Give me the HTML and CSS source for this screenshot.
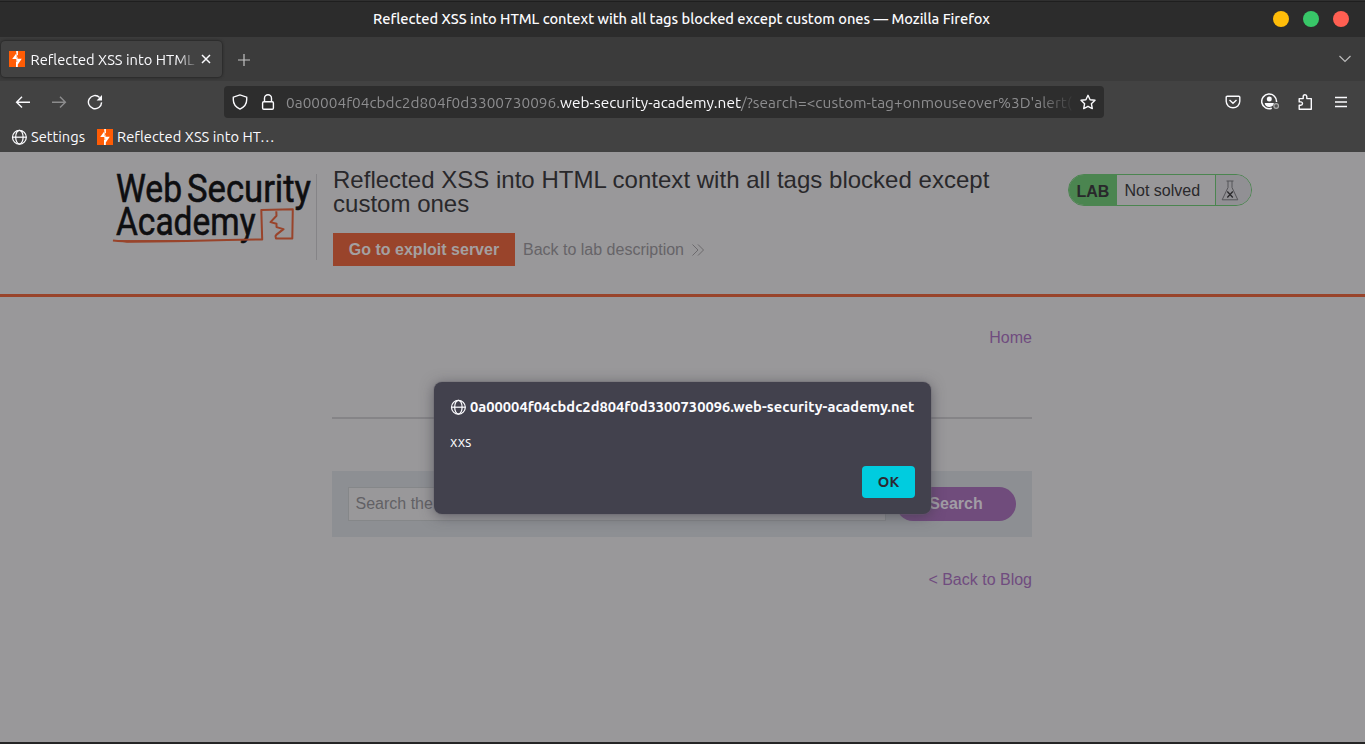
FILE: index.html
```html
<!DOCTYPE html>
<html lang="en">
<head>
<meta charset="utf-8">
<title>Reflected XSS into HTML context with all tags blocked except custom ones</title>
<link rel="stylesheet" href="styles.css">
</head>
<body>
<svg class="defs" width="0" height="0">
  <symbol id="bolt" viewBox="0 0 16 16"><rect width="16" height="16" fill="#ff5c05"/><path d="M7.2 0h1.7v4.2H7.4zM7.6 2 3.2 7.9h4.2L7.8 5zM8.5 5.3v2.5h4.3L8.6 13.7l-.3-3.9H7.2l.2-2zM7 10.5h1.8V16H7z" fill="#fff"/></symbol>
  <symbol id="globe" viewBox="0 0 16 16"><g fill="none" stroke="currentColor" stroke-width="1.25"><circle cx="8.4" cy="8.200" r="6.9"/><ellipse cx="8.4" cy="8.200" rx="3.700" ry="6.9"/><path d="M1.4 8.200h14"/></g></symbol>
</svg>
<header class="titlebar">
  <span class="window-title">Reflected XSS into HTML context with all tags blocked except custom ones — Mozilla Firefox</span>
  <div class="window-buttons"><i class="dot yellow"></i><i class="dot green"></i><i class="dot red"></i></div>
</header>
<nav class="tabs">
  <div class="tab">
    <svg class="i16"><use href="#bolt"/></svg>
    <span class="tab-title">Reflected XSS into HTML context</span>
    <svg class="close" viewBox="0 0 10 10"><path d="M1 1l8 8M9 1l-8 8"/></svg>
  </div>
  <svg class="plus" viewBox="0 0 12 12"><path d="M6 0v12M0 6h12"/></svg>
  <svg class="chevron" viewBox="0 0 12 8"><path d="M.5 1 6 6.5 11.5 1"/></svg>
</nav>
<div class="toolbar">
  <div class="nav-buttons">
    <svg class="i16 line" viewBox="0 0 16 16"><path d="M15 8.2H1.6M7 2.8 1.6 8.2 7 13.6"/></svg>
    <svg class="i16 line off" viewBox="0 0 16 16"><path d="M1 8.2h13.4M9 2.8l5.4 5.4L9 13.6"/></svg>
    <svg class="i16 line" viewBox="0 0 16 16"><path d="M12.6 3.4A6.6 6.6 0 1 0 14.6 8.4"/><path d="M15 1v5.4H9.6z" fill="currentColor" stroke="none"/></svg>
  </div>
  <div class="urlbar">
    <svg class="i16 line" viewBox="0 0 16 16"><path d="M8 .9 1.3 3.2v2.6c0 4.2 3 7.6 6.7 9.3 3.700-1.700 6.700-5.100 6.700-9.300V3.200z"/></svg>
    <svg class="i16 line lock" viewBox="0 0 16 16"><rect x="2.600" y="7.700" width="10.800" height="7.600" rx="1.200"/><path d="M4.500 7.500V4.200a3.500 3.500 0 0 1 7 0v3.300"/></svg>
    <span class="url"><span class="sub">0a00004f04cbdc2d804f0d3300730096.</span><span class="domain">web-security-academy.net</span><span class="path">/?search=&lt;custom-tag+onmouseover%3D'alert('</span></span>
    <svg class="i16 line" viewBox="0 0 16 16"><path d="m8 1.300 2.100 4.400 4.900.6-3.600 3.400.9 4.900L8 12.300l-4.300 2.300.9-4.900L1 6.300l4.900-.6z" stroke-linejoin="round"/></svg>
  </div>
  <div class="tools">
    <svg class="i16 line" viewBox="0 0 16 16"><path d="M2.200 2.300h11.600q1 0 1 1v4A6.800 6.500 0 0 1 1.200 7.300v-4q0-1 1-1zM4.500 6 8 9.300 11.500 6"/></svg>
    <svg class="account" viewBox="0 0 19 17"><g fill="none" stroke="currentColor" stroke-width="1.500"><path d="M10.800 15.300A7.400 7.400 0 1 1 15.500 9"/></g><circle cx="8.300" cy="6" r="2.500" fill="currentColor"/><path d="M3.700 9.900h9.200c-.2 2.600-2.100 4-4.600 4s-4.400-1.500-4.600-4z" fill="currentColor"/><circle cx="15.200" cy="13" r="2.300" fill="#555" stroke="#aaa" stroke-width="1.200"/></svg>
    <svg class="i16 line puzzle" viewBox="0 0 16 16"><path d="M2.200 15.300v-4h1.600a1.700 1.700 0 0 0 0-3.400H2.200V4.600h4V2.600a1.800 1.800 0 0 1 3.600 0v2h4.500v10.700z" stroke-linejoin="round"/></svg>
    <svg class="i16 line" viewBox="0 0 16 16"><path d="M2 3.500h12M2 8h12M2 12.500h12"/></svg>
  </div>
</div>
<div class="bookmarks">
  <svg class="i16"><use href="#globe"/></svg><span class="bm-settings">Settings</span>
  <svg class="i16 bm-icon"><use href="#bolt"/></svg><span class="bm-lab">Reflected XSS into HT…</span>
</div>
<main class="page">
  <header class="lab-header">
    <svg class="logo" viewBox="0 0 200 76">
      <g class="logo-text"><text x="3" y="28.300" textLength="66" lengthAdjust="spacingAndGlyphs">Web</text><text x="74" y="28.300" textLength="124" lengthAdjust="spacingAndGlyphs">Security</text><text x="3" y="60.700" textLength="139.500" lengthAdjust="spacingAndGlyphs">Academy</text></g>
      <g fill="none" stroke="#99442b" stroke-width="2" stroke-linejoin="round"><path d="M0 66.600q6 .8 13 .6L74 67l40-1 35.200-.6-.9-29.400 31.500-.7-.5 29.200-16.300.1-.5-2.500 1-1.500 7-5.500-7-2v-3.300l-6-1.700 6-6.300-.2-4.500"/></g><path d="M-1 66 18 66.300l56-.3v2L14 68.800z" fill="#99442b"/>
    </svg>
    <div class="lab-title">
      <h2>Reflected XSS into HTML context with all tags blocked except custom ones</h2>
      <div class="lab-links"><span class="exploit">Go to exploit server</span><span class="back">Back to lab description</span><svg class="more" viewBox="0 0 12 12"><path d="M.5.5 6 6 .5 11.500M6 .5 11.500 6 6 11.500"/></svg></div>
    </div>
    <div class="status"><b>LAB</b><span>Not solved</span><i><svg class="flask" viewBox="0 0 18 21"><path d="M5.500 1h7M7 1v6.500L1.200 19.800h15.600L11 7.500V1"/><path class="x" d="m6.300 11.500 5.500 6m0-6-5.500 6"/></svg></i></div>
  </header>
  <div class="content">
    <div class="home">Home</div>
    <hr>
    <div class="search"><div class="field">Search the blog...</div><div class="button">Search</div></div>
    <div class="blog">&lt; Back to Blog</div>
  </div>
</main>
<div class="dialog">
  <div class="origin"><svg class="i16"><use href="#globe"/></svg><b>0a00004f04cbdc2d804f0d3300730096.web-security-academy.net</b></div>
  <div class="message">xxs</div>
  <div class="ok">OK</div>
</div>
</body>
</html>
```
FILE: styles.css
```css
* { box-sizing: border-box; }
body { margin: 0; width: 1365px; height: 744px; overflow: hidden; display: flex; flex-direction: column; background: #252525; font: 14.67px/20px Ubuntu, "Noto Sans", sans-serif; color: #fbfbfe; white-space: nowrap; position: relative; }
svg { display: block; flex: none; }
.defs { position: absolute; }
.i16 { width: 16px; height: 16px; }
.line { fill: none; stroke: currentColor; stroke-width: 1.4; }
.titlebar { height: 37px; flex: none; background: #2c2c2c; border-top: 1px solid #303030; box-shadow: inset 0 1px #1f1f1f; display: grid; grid-template-columns: 1fr auto 1fr; align-items: center; }
.window-title { grid-column: 2; font-weight: 500; font-size: 14.67px; letter-spacing: -.04px; margin-right: 2px; }
.window-buttons { justify-self: end; display: flex; gap: 14px; margin-right: 16px; }
.dot { width: 16px; height: 16px; border-radius: 50%; }
.yellow { background: #ffbd09; } .green { background: #38c768; } .red { background: #ff5f52; }
.tabs { height: 44px; flex: none; background: #3b3b3b; display: flex; align-items: center; padding: 0 14px 0 1px; }
.tab { width: 221px; height: 36px; background: #424242; border-radius: 4px; box-shadow: 0 0 3px #161616; display: flex; align-items: center; padding-left: 8px; }
.tab-title { width: 165px; margin: 2px 6px 0 5px; padding-left: .5px; letter-spacing: .03px; overflow: hidden; -webkit-mask-image: linear-gradient(90deg, #000 148px, transparent 168px); mask-image: linear-gradient(90deg, #000 148px, transparent 168px); }
.close { width: 10px; height: 10px; fill: none; stroke: #fbfbfe; stroke-width: 1.5; }
.plus { width: 12px; height: 12px; margin: 1px 0 0 15.5px; fill: none; stroke: #c4c4c4; stroke-width: 1.2; }
.chevron { width: 12px; height: 8px; margin-left: auto; fill: none; stroke: #bbb; stroke-width: 1.2; }
.toolbar { height: 41px; flex: none; background: #424242; display: flex; align-items: center; }
.nav-buttons { width: 224px; padding-left: 15px; display: flex; gap: 20px; }
.off { opacity: .4; }
.urlbar { width: 880px; height: 32px; background: #2d2d2d; border-radius: 4px; display: flex; align-items: center; padding: 0 8px; }
.lock { margin-left: 12px; }
.url { width: 786px; margin: 2px 8px 0 10px; overflow: hidden; font-size: 15.4px; letter-spacing: .02px; color: #8d8d8f; -webkit-mask-image: linear-gradient(90deg, #000 752px, transparent 790px); mask-image: linear-gradient(90deg, #000 752px, transparent 790px); }
.domain { color: #fbfbfe; }
.path { letter-spacing: .05px; }
.tools { margin-left: auto; padding-right: 16px; display: flex; align-items: center; gap: 20px; }
.account { width: 19px; height: 17px; margin-right: -3px; }
.puzzle { margin-right: 0; }
.bookmarks { height: 30px; flex: none; background: #424242; display: flex; align-items: center; padding-left: 11px; }
.bm-settings { width: 54px; margin-left: 4px; }
.bm-icon { margin: 0 4px 0 12px; }
.bm-lab { letter-spacing: .05px; }
.page { height: 590px; flex: none; background: #99989a; color: #29282b; font: 16px/20px "Liberation Sans", Arial, sans-serif; }
.lab-header { height: 145px; border-bottom: 3px solid #99442b; display: flex; padding: 16px 113px 0; align-items: flex-start; }
.logo { width: 200px; height: 76px; margin-top: 6px; overflow: visible; }
.logo-text { font: 38.5px Roboto, sans-serif; fill: #0e0e10; stroke: #0e0e10; stroke-width: .6px; }
.lab-title { margin: 6px 0 0 3px; width: 720px; height: 86px; border-left: 1px solid #858487; padding-left: 16px; }
h2 { margin: -6px 0 0; font-size: 24px; line-height: 24px; font-weight: 400; white-space: normal; width: 680px; letter-spacing: .015px; }
.lab-links { margin-top: 17px; display: flex; align-items: center; height: 33px; color: #666468; }
.exploit { width: 182px; height: 33px; line-height: 33px; text-align: center; background: #99442b; color: #a4a0a1; font-weight: 700; margin-right: 8px; }
.more { width: 12px; height: 12px; margin-left: 8.5px; fill: none; stroke: #666468; stroke-width: .9; }
.status { margin: 6px 0 0 auto; width: 184px; height: 32px; border: 1px solid #4b8550; border-radius: 16px; display: flex; line-height: 31px; overflow: hidden; }
.status b { width: 48px; background: #4b8550; padding-left: 7.5px; line-height: 33px; }
.status span { width: 99px; border-right: 1px solid #4b8550; padding-left: 7.5px; }
.status i { flex: 1; background: #919094; padding: 5px 0 0 5px; }
.flask { width: 18px; height: 21px; fill: none; stroke: #555458; stroke-width: 1; } .x { stroke: #29282b; stroke-width: 1.3; }
.content { width: 700px; margin-left: 332px; padding-top: 31px; }
.home, .blog { color: #704c7f; text-align: right; }
hr { border: 0; height: 2px; background: #858487; margin: 69px 0 52px; }
.search { height: 66px; background: #8d8f93; padding: 16px; display: flex; }
.field { width: 538px; height: 34px; border: 1px solid #858789; background: #99989a; color: #626165; padding: 6px 6.5px; }
.button { margin-left: auto; width: 120px; height: 34px; line-height: 33px; border-radius: 17px; background: #704c7c; color: #a19da5; font-weight: 700; text-align: center; }
.blog { margin-top: 33px; }
.dialog { position: absolute; left: 434px; top: 382px; width: 497px; height: 132px; border-radius: 8px; background: #42414d; box-shadow: 0 0 0 1px #66656b40, 0 2px 14px #3a394499; padding: 15px 16px; display: flex; flex-direction: column; }
.origin { display: flex; align-items: center; gap: 4px; }
.origin b { font-size: 14.67px; font-weight: 600; letter-spacing: .02px; }
.message { font-size: 14.67px; margin-top: 15px; }
.ok { width: 53px; height: 32px; margin: 14px 0 0 auto; flex: none; border-radius: 4px; background: #00ccdf; color: #2b2a33; font-size: 14.67px; font-weight: 700; line-height: 32px; text-align: center; }
```
